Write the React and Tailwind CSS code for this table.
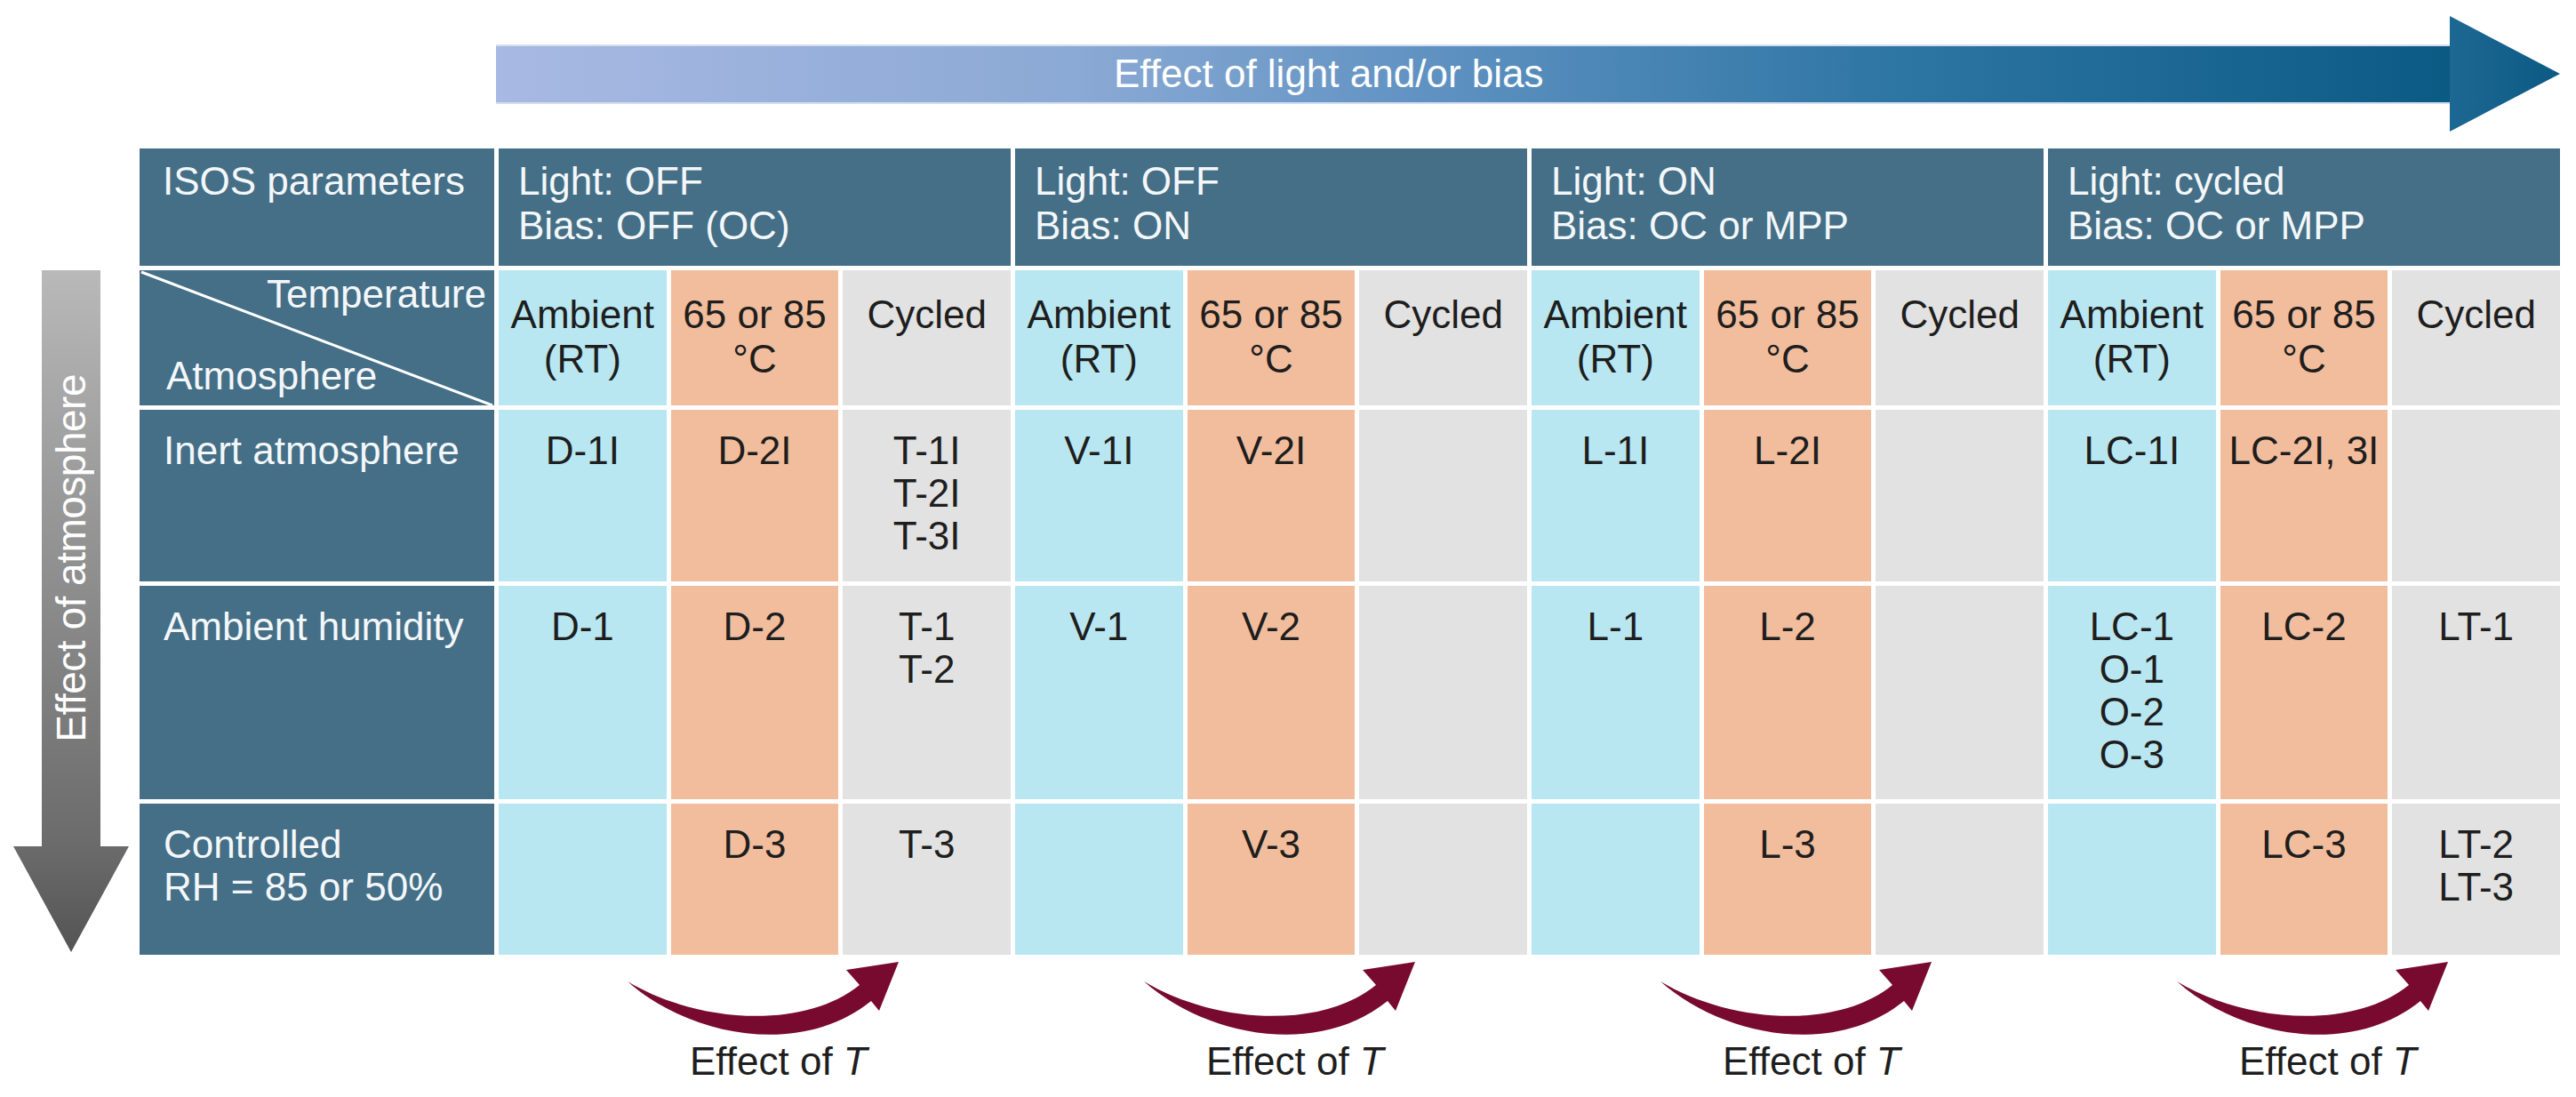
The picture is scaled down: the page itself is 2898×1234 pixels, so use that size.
import React from "react";

const groups = [
  { light: "Light: OFF", bias: "Bias: OFF (OC)" },
  { light: "Light: OFF", bias: "Bias: ON" },
  { light: "Light: ON", bias: "Bias: OC or MPP" },
  { light: "Light: cycled", bias: "Bias: OC or MPP" },
];

const subBg = ["bg-[#b9e7f1]", "bg-[#f2bd9c]", "bg-[#e2e2e2]"];

const tempLabels = [["Ambient", "(RT)"], ["65 or 85", "°C"], ["Cycled"]];

// one entry per atmosphere row, 12 cells (4 groups x 3 temperatures)
const rows = [
  {
    label: ["Inert atmosphere"],
    cells: [
      ["D-1I"], ["D-2I"], ["T-1I", "T-2I", "T-3I"],
      ["V-1I"], ["V-2I"], [],
      ["L-1I"], ["L-2I"], [],
      ["LC-1I"], ["LC-2I, 3I"], [],
    ],
  },
  {
    label: ["Ambient humidity"],
    cells: [
      ["D-1"], ["D-2"], ["T-1", "T-2"],
      ["V-1"], ["V-2"], [],
      ["L-1"], ["L-2"], [],
      ["LC-1", "O-1", "O-2", "O-3"], ["LC-2"], ["LT-1"],
    ],
  },
  {
    label: ["Controlled", "RH = 85 or 50%"],
    cells: [
      [], ["D-3"], ["T-3"],
      [], ["V-3"], [],
      [], ["L-3"], [],
      [], ["LC-3"], ["LT-2", "LT-3"],
    ],
  },
];

const TopArrow = () => (
  <div className="flex items-center pl-[558px] pt-[18px]">
    <div className="flex h-[67px] w-[2198px] items-center border-y-2 border-[#d3ddf0] bg-[linear-gradient(to_right,#a8b9e3_0%,#8aa9d4_30%,#5a8fbf_50%,#2d75a3_72%,#0b5a84_100%)] pl-[695px]">
      <span className="text-[44px] leading-none text-white">Effect of light and/or bias</span>
    </div>
    <svg width="124" height="130" viewBox="0 0 124 130">
      <defs>
        <linearGradient id="headGrad" x1="0" y1="0" x2="1" y2="0">
          <stop offset="0" stopColor="#1d6892" />
          <stop offset="1" stopColor="#0b5a84" />
        </linearGradient>
      </defs>
      <polygon points="0,0 124,65 0,130" fill="url(#headGrad)" />
    </svg>
  </div>
);

const SideArrow = () => (
  <div className="w-[157px] pl-[15px] pt-[137px]">
    <div className="flex w-[130px] flex-col items-center">
      <div className="flex h-[648px] w-[66px] items-center justify-center bg-gradient-to-b from-[#b9b9b9] to-[#6b6b6b]">
        <span className="rotate-180 text-[46px] leading-none tracking-[-0.5px] text-white [writing-mode:vertical-rl]">
          Effect of atmosphere
        </span>
      </div>
      <svg width="130" height="119" viewBox="0 0 130 119">
        <defs>
          <linearGradient id="sideGrad" x1="0" y1="0" x2="0" y2="1">
            <stop offset="0" stopColor="#6b6b6b" />
            <stop offset="1" stopColor="#545454" />
          </linearGradient>
        </defs>
        <polygon points="0,0 130,0 65,119" fill="url(#sideGrad)" />
      </svg>
    </div>
  </div>
);

const CurvedArrow = () => (
  <svg width="576" height="95" viewBox="0 0 576 95">
    <path
      d="M145,30 C215,92 340,116 419,52 L428,63 L450,8 L391,17 L406,34 C345,84 225,78 145,30 Z"
      fill="#780a30"
    />
  </svg>
);

const Cell = ({ lines, bg }) => (
  <div className={`${bg} pt-[22px] text-center text-[44px] leading-[48px] text-[#1e1e1e]`}>
    {lines.map((l) => (
      <div key={l}>{l}</div>
    ))}
  </div>
);

export default function App() {
  return (
    <div className="h-[1234px] w-[2898px] overflow-hidden bg-white font-['Liberation_Sans',Arial,sans-serif]">
      <TopArrow />

      <div className="mt-[19px] flex">
        <SideArrow />

        <div className="grid w-[2723px] grid-cols-[399px_repeat(12,minmax(0,1fr))] grid-rows-[132px_152px_193px_240px_170px] gap-[5px]">
          {/* parameters row */}
          <div className="bg-[#446f87] pl-[26px] pt-[12px] text-[44px] leading-[50px] text-[#f4f7f9]">
            ISOS parameters
          </div>
          {groups.map((g, i) => (
            <div
              key={i}
              className="col-span-3 bg-[#446f87] pl-[22px] pt-[12px] text-[44px] leading-[50px] text-[#f4f7f9]"
            >
              <div>{g.light}</div>
              <div>{g.bias}</div>
            </div>
          ))}

          {/* temperature row */}
          <div className="relative flex flex-col justify-between bg-[#446f87] text-[44px] leading-[44px] text-[#f4f7f9]">
            <svg className="absolute inset-0 h-full w-full" viewBox="0 0 399 152" preserveAspectRatio="none">
              <line x1="2" y1="2" x2="397" y2="152" stroke="#ffffff" strokeWidth="3" />
            </svg>
            <div className="relative pr-[9px] pt-[5px] text-right">Temperature</div>
            <div className="relative pb-[11px] pl-[30px]">Atmosphere</div>
          </div>
          {groups.map((g, gi) =>
            tempLabels.map((t, ti) => (
              <div
                key={`${gi}-${ti}`}
                className={`${subBg[ti]} pt-[25px] text-center text-[44px] leading-[50px] text-[#1e1e1e]`}
              >
                {t.map((l) => (
                  <div key={l}>{l}</div>
                ))}
              </div>
            ))
          )}

          {/* atmosphere rows */}
          {rows.map((r, ri) => (
            <React.Fragment key={ri}>
              <div className="bg-[#446f87] pl-[27px] pt-[22px] text-[44px] leading-[48px] text-[#f4f7f9]">
                {r.label.map((l) => (
                  <div key={l}>{l}</div>
                ))}
              </div>
              {r.cells.map((c, ci) => (
                <Cell key={ci} lines={c} bg={subBg[ci % 3]} />
              ))}
            </React.Fragment>
          ))}
        </div>
      </div>

      <div className="flex gap-[5px] pl-[561px]">
        {groups.map((g, i) => (
          <div key={i} className="w-[576px]">
            <CurvedArrow />
            <div className="pl-[215px] text-[44px] leading-[50px] text-[#1e1e1e]">
              Effect of <i>T</i>
            </div>
          </div>
        ))}
      </div>
    </div>
  );
}
